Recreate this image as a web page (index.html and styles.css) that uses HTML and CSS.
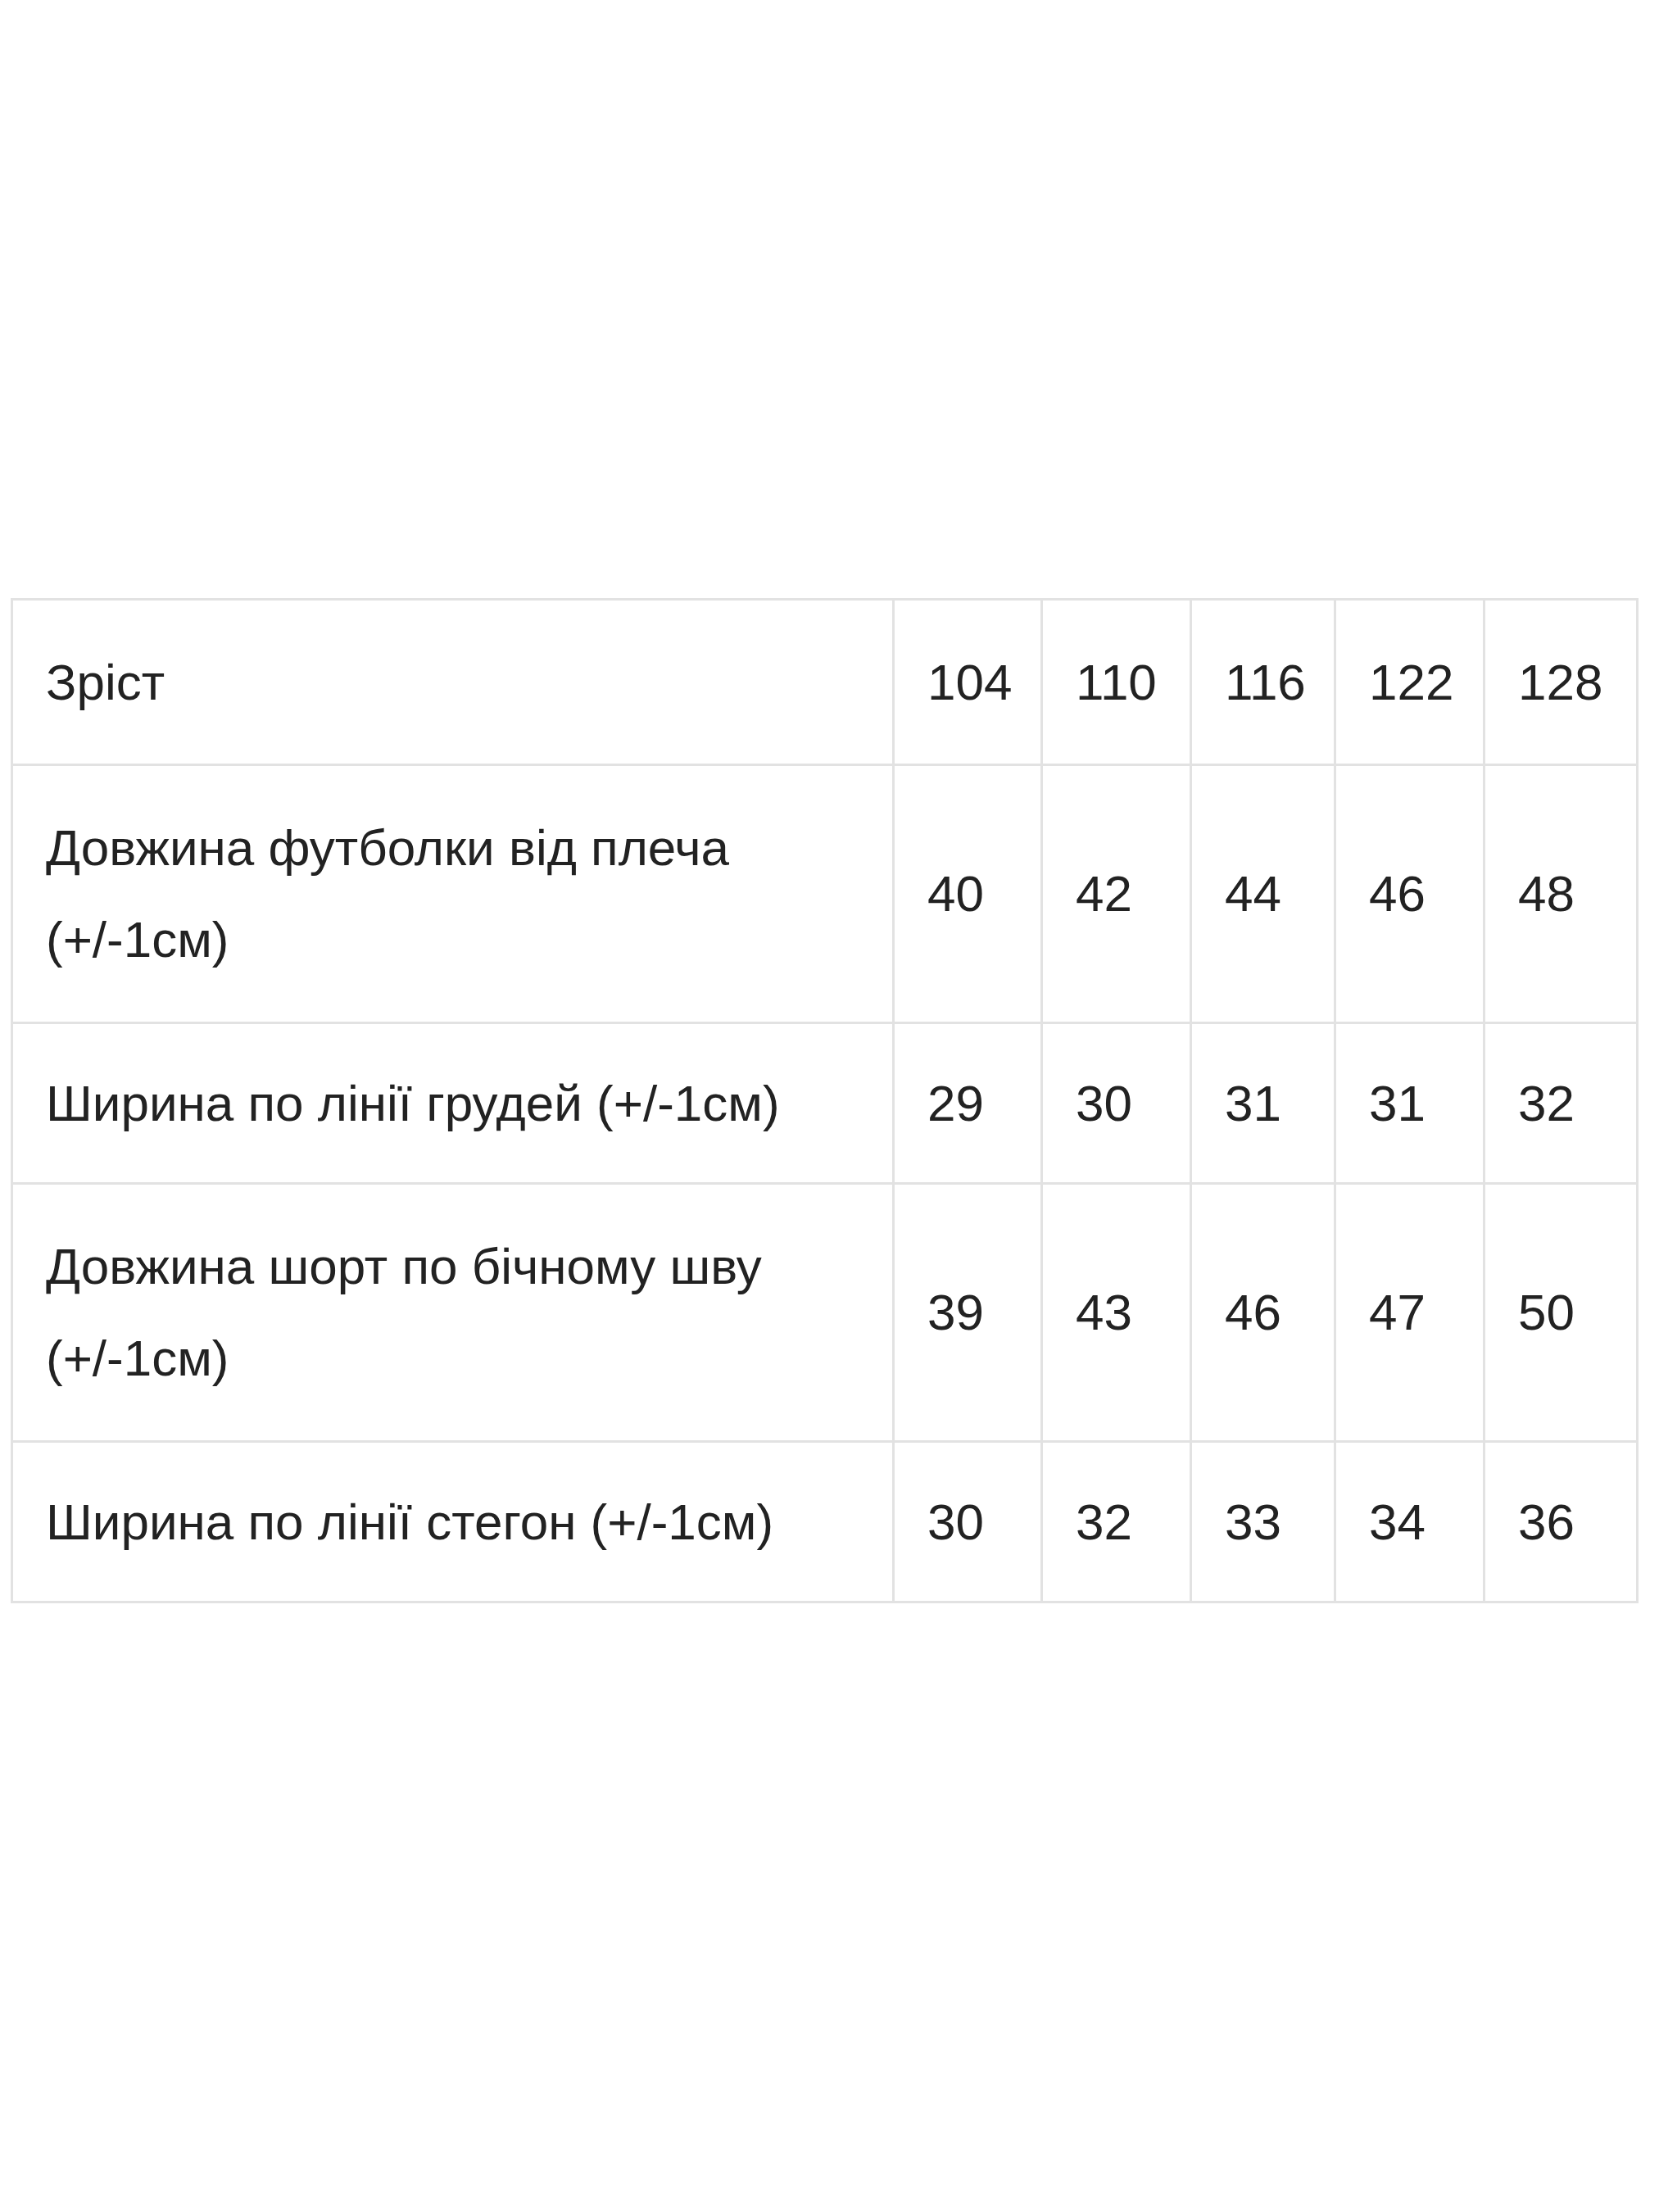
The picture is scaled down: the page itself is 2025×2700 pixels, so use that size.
FILE: index.html
```html
<!DOCTYPE html>
<html lang="uk">
<head>
<meta charset="utf-8">
<title>Розмірна сітка</title>
<link rel="stylesheet" href="styles.css">
</head>
<body>
<div class="page">
  <table class="sizes">
    <colgroup>
      <col class="c-label">
      <col class="c-num"><col class="c-num"><col class="c-num"><col class="c-num"><col class="c-num">
    </colgroup>
    <tbody>
      <tr class="r-head">
        <td>Зріст</td><td>104</td><td>110</td><td>116</td><td>122</td><td>128</td>
      </tr>
      <tr class="r-tall">
        <td>Довжина футболки від плеча<br>(+/-1см)</td><td>40</td><td>42</td><td>44</td><td>46</td><td>48</td>
      </tr>
      <tr class="r-short">
        <td>Ширина по лінії грудей (+/-1см)</td><td>29</td><td>30</td><td>31</td><td>31</td><td>32</td>
      </tr>
      <tr class="r-tall">
        <td>Довжина шорт по бічному шву<br>(+/-1см)</td><td>39</td><td>43</td><td>46</td><td>47</td><td>50</td>
      </tr>
      <tr class="r-short">
        <td>Ширина по лінії стегон (+/-1см)</td><td>30</td><td>32</td><td>33</td><td>34</td><td>36</td>
      </tr>
    </tbody>
  </table>
</div>
</body>
</html>
```

FILE: styles.css
```css
html, body {
  margin: 0;
  padding: 0;
  background: #ffffff;
}

.page {
  width: 2025px;
  height: 2700px;
  padding-top: 730px;
  padding-left: 13px;
  box-sizing: border-box;
}

.sizes {
  border-collapse: collapse;
  table-layout: fixed;
  width: 1986px;
  font-family: "Liberation Sans", Arial, sans-serif;
  font-size: 62px;
  color: #222222;
  border: 3px solid #dedede;
}

.c-label { width: 1076px; }
.c-num:nth-child(2) { width: 181px; }
.c-num:nth-child(3) { width: 182px; }
.c-num:nth-child(4) { width: 176px; }
.c-num:nth-child(5) { width: 182px; }
.c-num:nth-child(6) { width: 187px; }

.sizes td {
  border: 3px solid #e2e2e2;
  padding: 0 0 0 40px;
  vertical-align: middle;
  line-height: 112px;
  white-space: nowrap;
}

.r-head td { height: 199px; }
.r-short td { height: 193px; }
.r-tall td { height: 312px; }
```
